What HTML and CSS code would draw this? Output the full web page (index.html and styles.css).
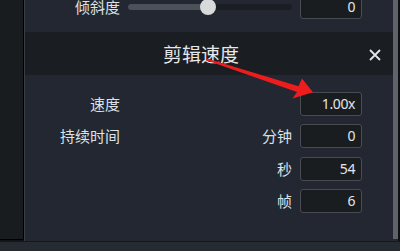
FILE: index.html
```html
<!DOCTYPE html>
<html lang="zh">
<head>
<meta charset="utf-8">
<link rel="stylesheet" href="styles.css">
</head>
<body>
<div class="app">
  <div class="main">
    <div class="strip"></div>
    <div class="panel">
      <div class="content">
        <div class="grid top-row">
          <div class="label">倾斜度</div>
          <div class="slider">
            <div class="track"><div class="fill" style="width:80px"></div></div>
            <div class="thumb" style="left:72px"></div>
          </div>
          <div class="input">0</div>
        </div>
        <div class="header">
          <div class="title">剪辑速度</div>
          <div class="close">
            <svg width="12" height="12" viewBox="0 0 12 12"><path d="M1 1 L11 11 M11 1 L1 11" stroke="#e4e6e9" stroke-width="1.8" fill="none"/></svg>
          </div>
        </div>
        <div class="grid form">
          <div class="label">速度</div>
          <div></div>
          <div class="input">1.00x</div>

          <div class="label">持续时间</div>
          <div class="sublabel">分钟</div>
          <div class="input">0</div>

          <div></div>
          <div class="sublabel">秒</div>
          <div class="input">54</div>

          <div></div>
          <div class="sublabel">帧</div>
          <div class="input">6</div>
        </div>
      </div>
      <div class="scrollbar"></div>
    </div>
  </div>
  <div class="bottom"></div>
</div>
<svg class="arrow" width="400" height="251" viewBox="0 0 400 251">
  <polygon fill="#ee1d1d" points="206,58.2 206.3,60.2 297,92 292.5,98.5 313,92.3 302,78.5 298.5,86.2"/>
</svg>
</body>
</html>
```
FILE: styles.css
```css
html, body {
  margin: 0;
  padding: 0;
}
body {
  width: 400px;
  height: 251px;
  overflow: hidden;
  background: #111316;
  font-family: "Noto Sans", "Noto Sans CJK SC", sans-serif;
  color: #dce1e7;
  position: relative;
}
.app {
  display: flex;
  flex-direction: column;
  height: 251px;
}
.main {
  display: flex;
  height: 241px;
}
.strip {
  width: 24px;
  height: 240px;
  box-sizing: border-box;
  background: #181c1f;
  border-right: 1px solid #000;
  border-bottom: 1px solid #000;
  flex: none;
}
.panel {
  flex: 1;
  display: flex;
  background: #232731;
  border-left: 1px solid #3a3e45;
  border-right: 2px solid #0e1012;
}
.content {
  width: 368px;
  flex: none;
  overflow: hidden;
}
.scrollbar {
  width: 5px;
  height: 239px;
  background: #5f646c;
}
.bottom {
  height: 10px;
  background: #262a31;
  border-top: 1px solid #15181b;
  box-sizing: border-box;
}
.grid {
  display: grid;
  grid-template-columns: 95px 164px 62px;
  column-gap: 8px;
  grid-auto-rows: 24px;
  row-gap: 8.5px;
  align-items: center;
}
.top-row {
  margin-top: -5px;
}
.label, .sublabel {
  text-align: right;
  font-size: 15px;
  line-height: 20px;
  font-family: "Noto Sans CJK SC", sans-serif;
}
.slider {
  position: relative;
  height: 16px;
  display: flex;
  align-items: center;
}
.track {
  width: 165px;
  height: 6px;
  border-radius: 3px;
  background: #1a1d21;
  overflow: hidden;
}
.fill {
  height: 6px;
  background: #4b5159;
}
.thumb {
  position: absolute;
  top: 0;
  width: 16px;
  height: 16px;
  border-radius: 50%;
  background: #d8d9db;
}
.input {
  box-sizing: border-box;
  height: 24px;
  border: 1px solid #474b52;
  border-radius: 3px;
  background: #1a1d20;
  text-align: right;
  padding-right: 6px;
  font-size: 14px;
  letter-spacing: -0.4px;
  line-height: 22px;
  color: #e2e6ea;
}
.header {
  margin-top: 13px;
  height: 43px;
  background: #1a1d21;
  display: flex;
  align-items: center;
}
.title {
  margin-left: 138px;
  font-size: 19px;
  font-family: "Noto Sans CJK SC", sans-serif;
  color: #e6e9ec;
  line-height: 24px;
  margin-top: 1px;
}
.close {
  margin-left: auto;
  margin-right: 12px;
  width: 12px;
  height: 12px;
  margin-top: 2px;
  display: flex;
}
.form {
  padding-top: 16.5px;
}
.arrow {
  position: absolute;
  left: 0;
  top: 0;
}
```
